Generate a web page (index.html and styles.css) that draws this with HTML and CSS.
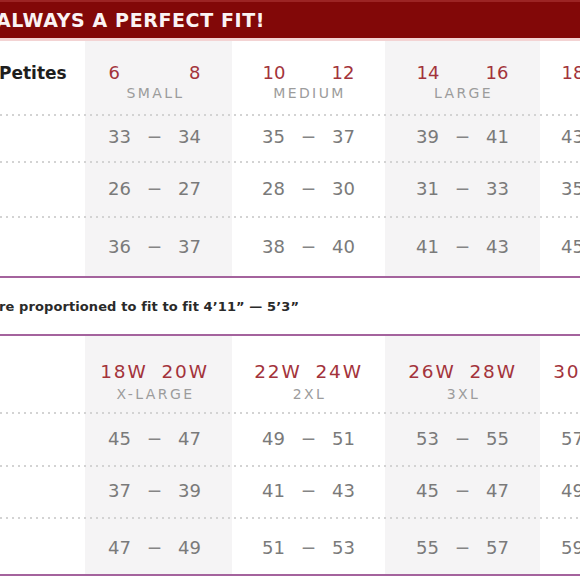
FILE: index.html
```html
<!DOCTYPE html>
<html>
<head>
<meta charset="utf-8">
<link rel="stylesheet" href="styles.css">
</head>
<body>
<div class="banner"><span class="banner-text">ALWAYS A PERFECT FIT!</span></div>

<section class="chart chart-top">
  <div class="row head head-top">
    <div class="label">Petites</div>
    <div class="cell c1"><div class="pair"><span>6</span><span>8</span></div><div class="size">SMALL</div></div>
    <div class="cell c2"><div class="pair"><span>10</span><span>12</span></div><div class="size">MEDIUM</div></div>
    <div class="cell c3"><div class="pair"><span>14</span><span>16</span></div><div class="size">LARGE</div></div>
    <div class="cell c4"><div class="pair"><span>18</span><span>20</span></div></div>
  </div>
  <div class="dots"></div>
  <div class="row data t1">
    <div class="label"></div>
    <div class="cell c1"><div class="range"><span>33</span><span class="dash">—</span><span>34</span></div></div>
    <div class="cell c2"><div class="range"><span>35</span><span class="dash">—</span><span>37</span></div></div>
    <div class="cell c3"><div class="range"><span>39</span><span class="dash">—</span><span>41</span></div></div>
    <div class="cell c4"><div class="range"><span>43</span><span class="dash">—</span><span>45</span></div></div>
  </div>
  <div class="dots"></div>
  <div class="row data t2">
    <div class="label"></div>
    <div class="cell c1"><div class="range"><span>26</span><span class="dash">—</span><span>27</span></div></div>
    <div class="cell c2"><div class="range"><span>28</span><span class="dash">—</span><span>30</span></div></div>
    <div class="cell c3"><div class="range"><span>31</span><span class="dash">—</span><span>33</span></div></div>
    <div class="cell c4"><div class="range"><span>35</span><span class="dash">—</span><span>37</span></div></div>
  </div>
  <div class="dots"></div>
  <div class="row data t3">
    <div class="label"></div>
    <div class="cell c1"><div class="range"><span>36</span><span class="dash">—</span><span>37</span></div></div>
    <div class="cell c2"><div class="range"><span>38</span><span class="dash">—</span><span>40</span></div></div>
    <div class="cell c3"><div class="range"><span>41</span><span class="dash">—</span><span>43</span></div></div>
    <div class="cell c4"><div class="range"><span>45</span><span class="dash">—</span><span>47</span></div></div>
  </div>
</section>

<div class="note">re proportioned to fit to fit 4’11” — 5’3”</div>

<section class="chart chart-bottom">
  <div class="row head head-bottom">
    <div class="label"></div>
    <div class="cell c1"><div class="pair"><span>18W</span><span>20W</span></div><div class="size">X-LARGE</div></div>
    <div class="cell c2"><div class="pair"><span>22W</span><span>24W</span></div><div class="size">2XL</div></div>
    <div class="cell c3"><div class="pair"><span>26W</span><span>28W</span></div><div class="size">3XL</div></div>
    <div class="cell c4"><div class="pair"><span>30W</span><span>32W</span></div></div>
  </div>
  <div class="dots"></div>
  <div class="row data b1">
    <div class="label"></div>
    <div class="cell c1"><div class="range"><span>45</span><span class="dash">—</span><span>47</span></div></div>
    <div class="cell c2"><div class="range"><span>49</span><span class="dash">—</span><span>51</span></div></div>
    <div class="cell c3"><div class="range"><span>53</span><span class="dash">—</span><span>55</span></div></div>
    <div class="cell c4"><div class="range"><span>57</span><span class="dash">—</span><span>59</span></div></div>
  </div>
  <div class="dots"></div>
  <div class="row data b2">
    <div class="label"></div>
    <div class="cell c1"><div class="range"><span>37</span><span class="dash">—</span><span>39</span></div></div>
    <div class="cell c2"><div class="range"><span>41</span><span class="dash">—</span><span>43</span></div></div>
    <div class="cell c3"><div class="range"><span>45</span><span class="dash">—</span><span>47</span></div></div>
    <div class="cell c4"><div class="range"><span>49</span><span class="dash">—</span><span>51</span></div></div>
  </div>
  <div class="dots"></div>
  <div class="row data b3">
    <div class="label"></div>
    <div class="cell c1"><div class="range"><span>47</span><span class="dash">—</span><span>49</span></div></div>
    <div class="cell c2"><div class="range"><span>51</span><span class="dash">—</span><span>53</span></div></div>
    <div class="cell c3"><div class="range"><span>55</span><span class="dash">—</span><span>57</span></div></div>
    <div class="cell c4"><div class="range"><span>59</span><span class="dash">—</span><span>61</span></div></div>
  </div>
</section>
</body>
</html>
```
FILE: styles.css
```css
html, body {
  margin: 0;
  padding: 0;
  width: 580px;
  height: 580px;
  overflow: hidden;
  background: #ffffff;
  font-family: "DejaVu Sans", "Liberation Sans", sans-serif;
}

.banner {
  height: 36px;
  background: #820808;
  border-top: 2px solid #9c2424;
  border-bottom: 3px solid #f3d3d3;
  width: 695px;
  display: flex;
  align-items: center;
}

.banner-text {
  margin-left: -4px;
  color: #fbf3f3;
  font-weight: bold;
  font-size: 19px;
  letter-spacing: 0.6px;
}

.chart {
  width: 695px;
  background: linear-gradient(to right,
    #ffffff 0 85px,
    #f5f4f5 85px 232px,
    #ffffff 232px 385px,
    #f5f4f5 385px 540px,
    #ffffff 540px);
  border-bottom: 2px solid #a4639d;
}

.row {
  display: grid;
  grid-template-columns: 85px 147px 153px 155px 155px;
  box-sizing: border-box;
}

.label {
  font-weight: bold;
  font-size: 17px;
  color: #1e1e1e;
  margin-left: -1px;
  line-height: 20px;
}

.cell {
  display: flex;
  flex-direction: column;
  align-items: center;
}

.cell.c1 { padding-right: 8px; }
.cell.c4 { padding-right: 20px; }

.pair {
  display: flex;
  justify-content: space-between;
  gap: 16px;
  min-width: 92px;
  color: #a3333b;
  font-size: 18px;
  line-height: 20px;
}

.head-bottom .pair {
  letter-spacing: 1.8px;
  gap: 14px;
  font-size: 18.5px;
}

.size {
  color: #9c9c9c;
  font-size: 14px;
  letter-spacing: 2.4px;
  line-height: 16px;
  margin-top: 2px;
  padding-left: 2px;
}

.head-top { height: 73px; padding-top: 22px; }
.head-bottom { height: 76px; padding-top: 26px; }
.head-bottom .size { margin-top: 4px; }

.dots {
  height: 2px;
  background-image: linear-gradient(to right, #d3d3d3 2px, transparent 2px);
  background-size: 6px 2px;
  background-repeat: repeat-x;
}

.range {
  display: flex;
  align-items: center;
  gap: 17px;
  color: #7a7a7a;
  font-size: 18px;
  line-height: 20px;
}

.dash {
  font-size: 13px;
  font-weight: bold;
  color: #858585;
}

.t1 { height: 45px; padding-top: 11px; }
.t2 { height: 53px; padding-top: 16px; }
.t3 { height: 58px; padding-top: 19px; }

.note {
  width: 695px;
  height: 58px;
  box-sizing: border-box;
  display: flex;
  align-items: center;
  font-size: 13px;
  font-weight: bold;
  color: #2a2a2a;
  border-bottom: 2px solid #a4639d;
  margin-left: -1px;
  letter-spacing: 0.1px;
}

.b1 { height: 51px; padding-top: 15px; }
.b2 { height: 50px; padding-top: 14px; }
.b3 { height: 55px; padding-top: 19px; }
```
